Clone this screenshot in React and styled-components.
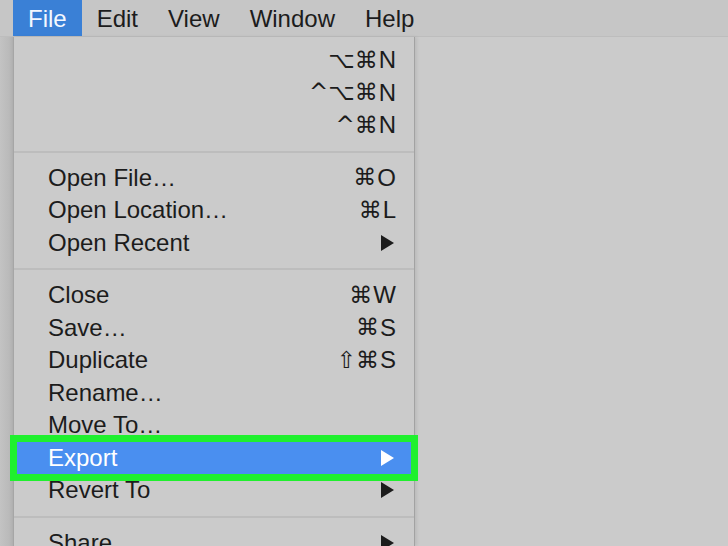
import styled, { createGlobalStyle } from "styled-components"

const Global = createGlobalStyle`
  html, body {
    margin: 0;
    padding: 0;
    overflow: hidden;
    background: #cbcbcb;
  }
`

const Screen = styled.div`
  width: 728px;
  height: 546px;
  display: flex;
  flex-direction: column;
  overflow: hidden;
  font-family: "Liberation Sans", Arial, sans-serif;
  color: #1c1c1c;
`

const MenuBar = styled.div`
  height: 37px;
  flex-shrink: 0;
  display: flex;
  padding-left: 13px;
  background: #c6c6c6;
  border-bottom: 1px solid #bdbdbd;
  box-sizing: border-box;
`

const BarItem = styled.div`
  padding: 0 15px;
  font-size: 24px;
  line-height: 37px;
  background: ${p => (p.$active ? "#3a80d6" : "transparent")};
  color: ${p => (p.$active ? "#f4f8ff" : "#1c1c1c")};
`

const Body = styled.div`
  flex: 1;
  display: flex;
  min-height: 0;
`

const Behind = styled.div`
  width: 13px;
  flex-shrink: 0;
  background: linear-gradient(to right, #c3c3c3, #bababa 70%, #b0b0b0);
`

const Menu = styled.div`
  width: 402px;
  flex-shrink: 0;
  box-sizing: border-box;
  padding-top: 7px;
  background: #cbcbcb;
  border-left: 1px solid #a6a6a6;
  border-right: 1px solid #a2a2a2;
  box-shadow: 2px 0 3px rgba(0, 0, 0, 0.08);
`

const Row = styled.div`
  height: 32.5px;
  display: flex;
  align-items: center;
  font-size: 24px;
  color: ${p => (p.$selected ? "#ffffff" : "#1c1c1c")};
  background: ${p => (p.$selected ? "#4a8ff0" : "transparent")};
  margin: ${p => (p.$selected ? "0 3px" : "0")};
  padding-left: ${p => (p.$selected ? "31px" : "34px")};
  padding-right: ${p => (p.$selected ? "15px" : "18px")};
  outline: ${p => (p.$selected ? "7px solid #1ff02e" : "none")};
`

const Label = styled.span`
  flex: 1;
  white-space: nowrap;
`

const Shortcut = styled.span`
  display: flex;
  align-items: center;
  white-space: nowrap;
`

const Glyph = styled.span`
  font-family: "DejaVu Sans", sans-serif;
  font-size: 23px;
  line-height: 1;
  margin-right: 1px;
`

const Separator = styled.div`
  height: 20px;
  display: flex;
  align-items: center;
  &::after {
    content: "";
    flex: 1;
    height: 2px;
    background: #bdbdbd;
  }
`

const Arrow = ({ light }) => (
  <svg width="13" height="16" viewBox="0 0 13 16" style={{ marginRight: 2 }}>
    <path d="M0 0 L13 8 L0 16 Z" fill={light ? "#ffffff" : "#1c1c1c"} />
  </svg>
)

const Keys = ({ mods, letter }) => (
  <Shortcut>
    {mods && <Glyph>{mods}</Glyph>}
    {letter}
  </Shortcut>
)

const groups = [
  [
    { mods: "⌥⌘", key: "N" },
    { mods: "^⌥⌘", key: "N" },
    { mods: "^⌘", key: "N" },
  ],
  [
    { label: "Open File…", mods: "⌘", key: "O" },
    { label: "Open Location…", mods: "⌘", key: "L" },
    { label: "Open Recent", sub: true },
  ],
  [
    { label: "Close", mods: "⌘", key: "W" },
    { label: "Save…", mods: "⌘", key: "S" },
    { label: "Duplicate", mods: "⇧⌘", key: "S" },
    { label: "Rename…" },
    { label: "Move To…" },
    { label: "Export", sub: true, selected: true },
    { label: "Revert To", sub: true },
  ],
  [{ label: "Share", sub: true }],
]

export default function App() {
  return (
    <>
      <Global />
      <Screen>
        <MenuBar>
          <BarItem $active>File</BarItem>
          <BarItem>Edit</BarItem>
          <BarItem>View</BarItem>
          <BarItem>Window</BarItem>
          <BarItem>Help</BarItem>
        </MenuBar>
        <Body>
          <Behind />
          <Menu>
            {groups.map((items, gi) => (
              <div key={gi}>
                {gi > 0 && <Separator />}
                {items.map((it, i) => (
                  <Row key={i} $selected={it.selected}>
                    <Label>{it.label}</Label>
                    {it.sub ? (
                      <Arrow light={it.selected} />
                    ) : it.key ? (
                      <Keys mods={it.mods} letter={it.key} />
                    ) : null}
                  </Row>
                ))}
              </div>
            ))}
          </Menu>
        </Body>
      </Screen>
    </>
  )
}
